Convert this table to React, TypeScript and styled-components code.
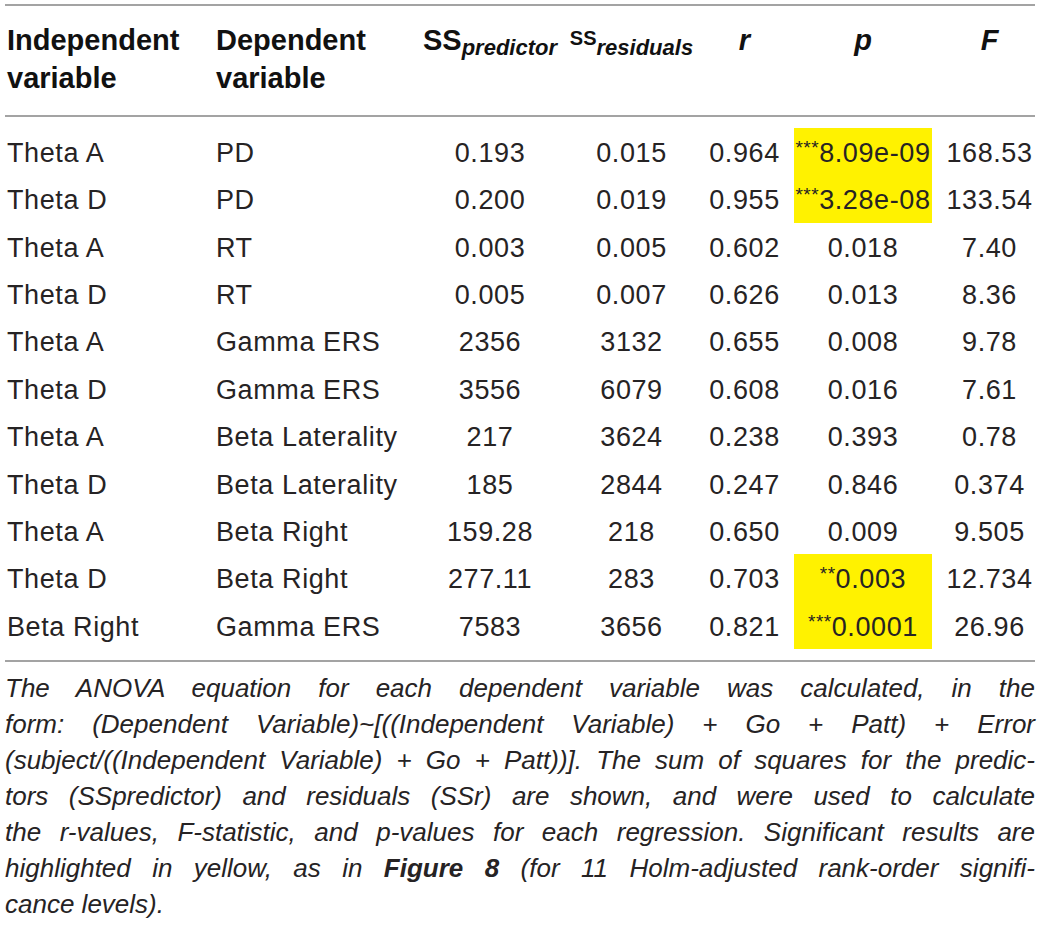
import React from 'react';
import styled, { createGlobalStyle } from 'styled-components';

const GlobalStyle = createGlobalStyle`
  html, body {
    margin: 0;
    padding: 0;
    background: #ffffff;
  }
  body {
    font-family: "Liberation Sans", Arial, sans-serif;
    color: #262324;
  }
`;

const COLS = '210px 205px 140px 143px 91px 138px 103px';

const Page = styled.div`
  width: 1030px;
  padding: 4px 0 0 5px;
`;

const Table = styled.div`
  border-top: 2px solid #a3a3a3;
  border-bottom: 2px solid #a3a3a3;
`;

const HeadRow = styled.div`
  display: grid;
  grid-template-columns: ${COLS};
  height: 109px;
  border-bottom: 2px solid #a3a3a3;
`;

const HeadCell = styled.div<{ $align?: 'left' | 'center'; $pl?: number; $pr?: number }>`
  padding-top: 15px;
  padding-left: ${p => p.$pl ?? 0}px;
  padding-right: ${p => p.$pr ?? 0}px;
  text-align: ${p => p.$align ?? 'center'};
  font-size: 29px;
  line-height: 38px;
  font-weight: 700;
  color: #111;
  white-space: nowrap;
`;

const Italic = styled.span`
  font-style: italic;
`;

const Sub = styled.span`
  font-size: 22px;
  font-style: italic;
  line-height: 0;
  vertical-align: -5px;
`;

const SmallCaps = styled.span`
  font-size: 20px;
  line-height: 0;
  vertical-align: 5px;
`;

const Body = styled.div`
  padding: 11px 0;
`;

const Row = styled.div`
  display: grid;
  grid-template-columns: ${COLS};
  height: 47.36px;
`;

const Cell = styled.div<{ $align?: 'left' | 'center'; $pl?: number; $pr?: number; $hi?: boolean }>`
  padding: 3px ${p => p.$pr ?? 0}px 0 ${p => p.$pl ?? 0}px;
  text-align: ${p => p.$align ?? 'center'};
  font-size: 27px;
  line-height: 44px;
  letter-spacing: 0.6px;
  white-space: nowrap;
  background: ${p => (p.$hi ? '#fff200' : 'transparent')};
`;

const Stars = styled.span`
  font-size: 19px;
  letter-spacing: 0.5px;
  vertical-align: 8px;
  line-height: 0;
`;

const Caption = styled.div`
  padding-top: 8px;
  font-style: italic;
  font-size: 26px;
  line-height: 36px;
  color: #262324;
`;

const CaptionLine = styled.div<{ $last?: boolean }>`
  text-align: justify;
  text-align-last: ${p => (p.$last ? 'left' : 'justify')};
  white-space: nowrap;
`;

const Bold = styled.b`
  font-weight: 700;
`;

type RowData = {
  iv: string;
  dv: string;
  ssp: string;
  ssr: string;
  r: string;
  p: string;
  stars?: string;
  f: string;
};

const rows: RowData[] = [
  { iv: 'Theta A', dv: 'PD', ssp: '0.193', ssr: '0.015', r: '0.964', p: '8.09e-09', stars: '***', f: '168.53' },
  { iv: 'Theta D', dv: 'PD', ssp: '0.200', ssr: '0.019', r: '0.955', p: '3.28e-08', stars: '***', f: '133.54' },
  { iv: 'Theta A', dv: 'RT', ssp: '0.003', ssr: '0.005', r: '0.602', p: '0.018', f: '7.40' },
  { iv: 'Theta D', dv: 'RT', ssp: '0.005', ssr: '0.007', r: '0.626', p: '0.013', f: '8.36' },
  { iv: 'Theta A', dv: 'Gamma ERS', ssp: '2356', ssr: '3132', r: '0.655', p: '0.008', f: '9.78' },
  { iv: 'Theta D', dv: 'Gamma ERS', ssp: '3556', ssr: '6079', r: '0.608', p: '0.016', f: '7.61' },
  { iv: 'Theta A', dv: 'Beta Laterality', ssp: '217', ssr: '3624', r: '0.238', p: '0.393', f: '0.78' },
  { iv: 'Theta D', dv: 'Beta Laterality', ssp: '185', ssr: '2844', r: '0.247', p: '0.846', f: '0.374' },
  { iv: 'Theta A', dv: 'Beta Right', ssp: '159.28', ssr: '218', r: '0.650', p: '0.009', f: '9.505' },
  { iv: 'Theta D', dv: 'Beta Right', ssp: '277.11', ssr: '283', r: '0.703', p: '0.003', stars: '**', f: '12.734' },
  { iv: 'Beta Right', dv: 'Gamma ERS', ssp: '7583', ssr: '3656', r: '0.821', p: '0.0001', stars: '***', f: '26.96' },
];

export default function App() {
  return (
    <Page>
      <GlobalStyle />
      <Table>
        <HeadRow>
          <HeadCell $align="left" $pl={2}>
            Independent
            <br />
            variable
          </HeadCell>
          <HeadCell $align="left" $pl={1}>
            Dependent
            <br />
            variable
          </HeadCell>
          <HeadCell>
            SS<Sub>predictor</Sub>
          </HeadCell>
          <HeadCell>
            <SmallCaps>SS</SmallCaps>
            <Sub>residuals</Sub>
          </HeadCell>
          <HeadCell $pr={8}>
            <Italic>r</Italic>
          </HeadCell>
          <HeadCell>
            <Italic>p</Italic>
          </HeadCell>
          <HeadCell $pl={12}>
            <Italic>F</Italic>
          </HeadCell>
        </HeadRow>
        <Body>
          {rows.map((r, i) => (
            <Row key={i}>
              <Cell $align="left" $pl={2}>{r.iv}</Cell>
              <Cell $align="left" $pl={1}>{r.dv}</Cell>
              <Cell>{r.ssp}</Cell>
              <Cell>{r.ssr}</Cell>
              <Cell $pr={8}>{r.r}</Cell>
              <Cell $hi={!!r.stars}>
                {r.stars && <Stars>{r.stars}</Stars>}
                {r.p}
              </Cell>
              <Cell $pl={12}>{r.f}</Cell>
            </Row>
          ))}
        </Body>
      </Table>
      <Caption>
        <CaptionLine>The ANOVA equation for each dependent variable was calculated, in the</CaptionLine>
        <CaptionLine>form: (Dependent Variable)~[((Independent Variable) + Go + Patt) + Error</CaptionLine>
        <CaptionLine>(subject/((Independent Variable) + Go + Patt))]. The sum of squares for the predic-</CaptionLine>
        <CaptionLine>tors (SSpredictor) and residuals (SSr) are shown, and were used to calculate</CaptionLine>
        <CaptionLine>the r-values, F-statistic, and p-values for each regression. Significant results are</CaptionLine>
        <CaptionLine>
          highlighted in yellow, as in <Bold>Figure 8</Bold> (for 11 Holm-adjusted rank-order signifi-
        </CaptionLine>
        <CaptionLine $last>cance levels).</CaptionLine>
      </Caption>
    </Page>
  );
}
